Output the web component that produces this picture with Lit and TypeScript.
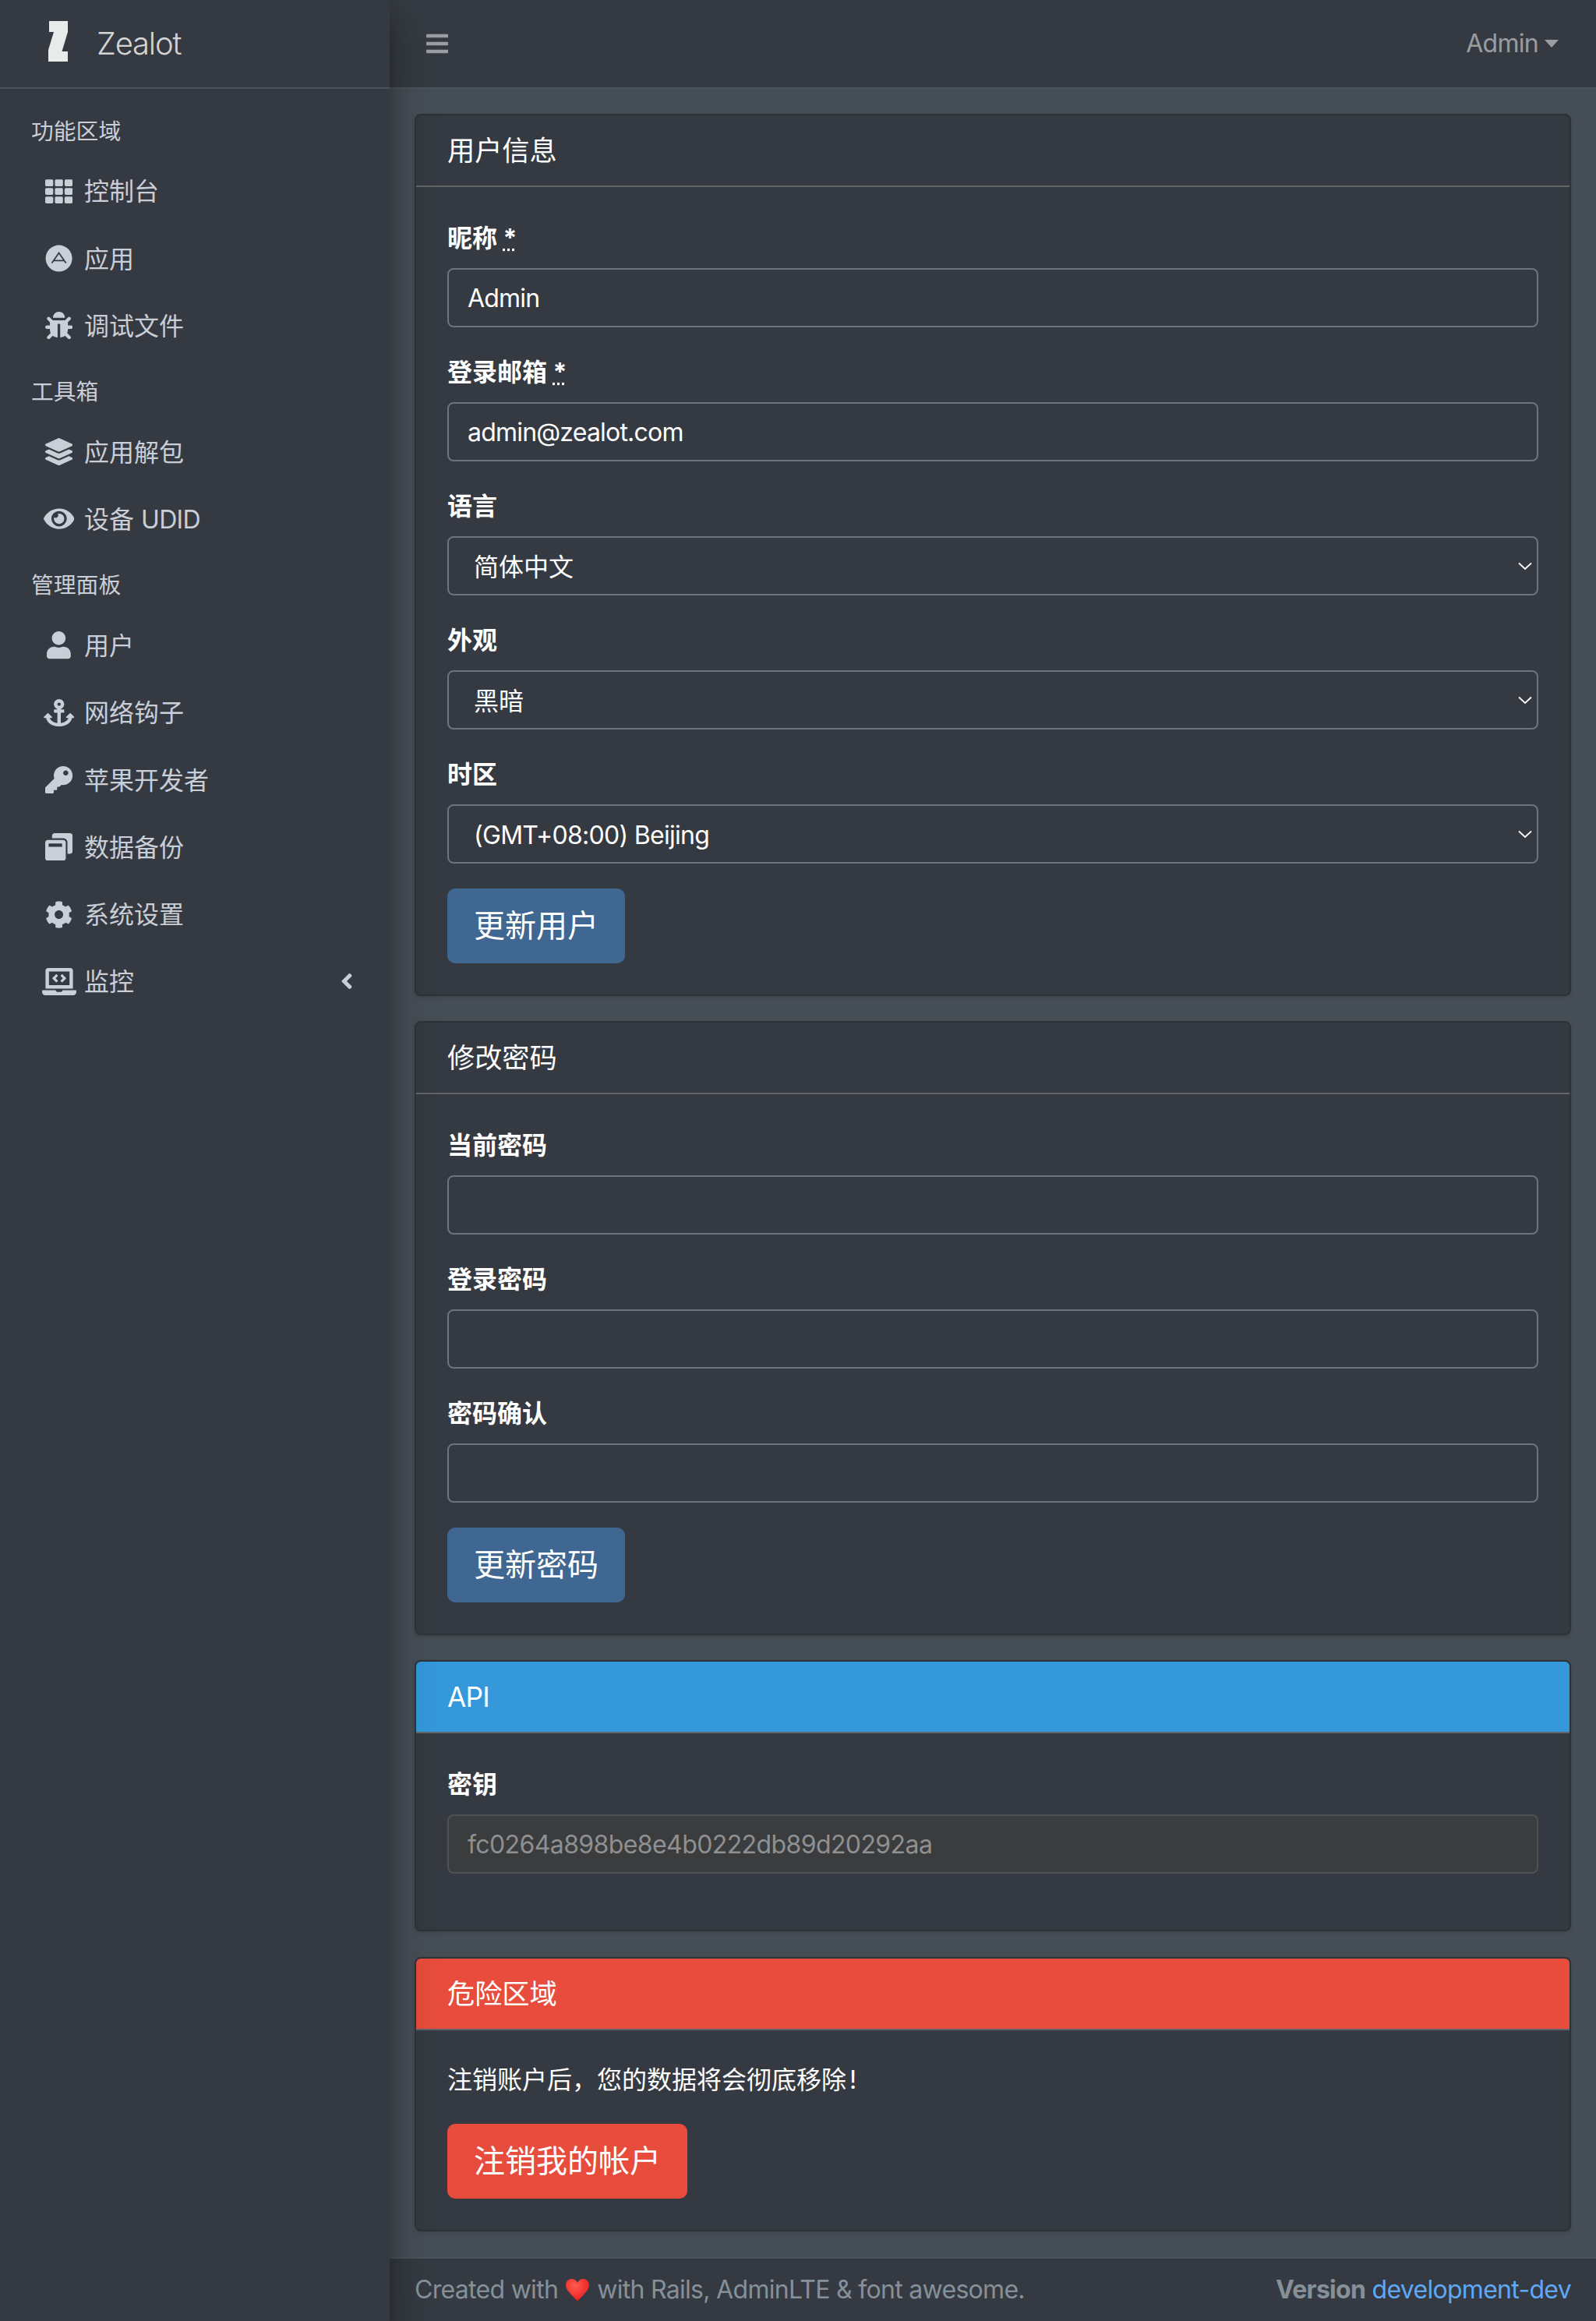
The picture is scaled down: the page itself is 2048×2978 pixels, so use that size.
import { LitElement, html, css, svg } from "lit";
import { customElement } from "lit/decorators.js";

type Icon = { w: number; h?: number; d: string };

const ICONS: Record<string, Icon> = {
  th: { w: 512, d: "M149.333 56v80c0 13.255-10.745 24-24 24H24c-13.255 0-24-10.745-24-24V56c0-13.255 10.745-24 24-24h101.333c13.255 0 24 10.745 24 24zm181.334 240v-80c0-13.255-10.745-24-24-24H205.333c-13.255 0-24 10.745-24 24v80c0 13.255 10.745 24 24 24h101.333c13.256 0 24.001-10.745 24.001-24zm32-240v80c0 13.255 10.745 24 24 24H488c13.255 0 24-10.745 24-24V56c0-13.255-10.745-24-24-24H386.667c-13.255 0-24 10.745-24 24zm-32 80V56c0-13.255-10.745-24-24-24H205.333c-13.255 0-24 10.745-24 24v80c0 13.255 10.745 24 24 24h101.333c13.256 0 24.001-10.745 24.001-24zm-205.334 56H24c-13.255 0-24 10.745-24 24v80c0 13.255 10.745 24 24 24h101.333c13.255 0 24-10.745 24-24v-80c0-13.255-10.745-24-24-24zM0 376v80c0 13.255 10.745 24 24 24h101.333c13.255 0 24-10.745 24-24v-80c0-13.255-10.745-24-24-24H24c-13.255 0-24 10.745-24 24zm386.667-56H488c13.255 0 24-10.745 24-24v-80c0-13.255-10.745-24-24-24H386.667c-13.255 0-24 10.745-24 24v80c0 13.255 10.745 24 24 24zm0 160H488c13.255 0 24-10.745 24-24v-80c0-13.255-10.745-24-24-24H386.667c-13.255 0-24 10.745-24 24v80c0 13.255 10.745 24 24 24zM181.333 376v80c0 13.255 10.745 24 24 24h101.333c13.255 0 24-10.745 24-24v-80c0-13.255-10.745-24-24-24H205.333c-13.255 0-24 10.745-24 24z" },
  bug: { w: 512, d: "M511.988 288.9c-.478 17.43-15.217 31.1-32.653 31.1H424v16c0 21.864-4.882 42.584-13.6 61.145l60.228 60.228c12.496 12.497 12.496 32.758 0 45.255-12.498 12.497-32.759 12.496-45.256 0l-54.736-54.736C345.886 467.965 314.351 480 280 480V236c0-6.627-5.373-12-12-12h-24c-6.627 0-12 5.373-12 12v244c-34.351 0-65.886-12.035-90.636-32.108l-54.736 54.736c-12.498 12.497-32.759 12.496-45.256 0-12.496-12.497-12.496-32.758 0-45.255l60.228-60.228C92.882 378.584 88 357.864 88 336v-16H32.666C15.23 320 .491 306.33.013 288.9-.484 270.816 14.028 256 32 256h56v-58.745l-46.628-46.628c-12.496-12.497-12.496-32.758 0-45.255 12.498-12.497 32.758-12.497 45.256 0L141.255 160h229.489l54.627-54.627c12.498-12.497 32.758-12.497 45.256 0 12.496 12.497 12.496 32.758 0 45.255L424 197.255V256h56c17.972 0 32.484 14.816 31.988 32.9zM257 0c-61.856 0-112 50.144-112 112h224C369 50.144 318.856 0 257 0z" },
  layers: { w: 512, d: "M12.41 148.02l232.94 105.67c6.8 3.09 14.49 3.09 21.29 0l232.94-105.67c16.55-7.51 16.55-32.52 0-40.03L266.65 2.31a25.607 25.607 0 0 0-21.29 0L12.41 107.98c-16.55 7.51-16.55 32.53 0 40.04zm487.18 88.28l-58.09-26.33-161.64 73.27c-7.56 3.43-15.59 5.17-23.86 5.17s-16.29-1.74-23.86-5.17L70.51 209.97l-58.1 26.33c-16.55 7.5-16.55 32.5 0 40l232.94 105.59c6.8 3.08 14.49 3.08 21.29 0L499.59 276.3c16.55-7.5 16.55-32.5 0-40zm0 127.8l-57.87-26.23-161.86 73.37c-7.56 3.43-15.59 5.17-23.86 5.17s-16.29-1.74-23.86-5.17L70.29 337.87 12.41 364.1c-16.55 7.5-16.55 32.5 0 40l232.94 105.59c6.8 3.08 14.49 3.08 21.29 0L499.59 404.1c16.55-7.5 16.55-32.5 0-40z" },
  eye: { w: 576, d: "M572.52 241.4C518.29 135.59 410.93 64 288 64S57.68 135.64 3.48 241.41a32.35 32.35 0 0 0 0 29.19C57.71 376.41 165.07 448 288 448s230.32-71.64 284.52-177.41a32.35 32.35 0 0 0 0-29.19zM288 400a144 144 0 1 1 144-144 143.93 143.93 0 0 1-144 144zm0-240a95.31 95.31 0 0 0-25.31 3.79 47.85 47.85 0 0 1-66.9 66.9A95.78 95.78 0 1 0 288 160z" },
  user: { w: 448, d: "M224 256c70.7 0 128-57.3 128-128S294.7 0 224 0 96 57.3 96 128s57.3 128 128 128zm89.6 32h-16.7c-22.2 10.2-46.9 16-72.9 16s-50.6-5.8-72.9-16h-16.7C60.2 288 0 348.2 0 422.4V464c0 26.5 21.5 48 48 48h352c26.5 0 48-21.5 48-48v-41.6c0-74.2-60.2-134.4-134.4-134.4z" },
  anchor: { w: 576, d: "M12.971 352h32.394C67.172 454.735 181.944 512 288 512c106.229 0 220.853-57.38 242.635-160h32.394c10.691 0 16.045-12.926 8.485-20.485l-67.029-67.029c-4.686-4.686-12.284-4.686-16.971 0l-67.029 67.029c-7.56 7.56-2.206 20.485 8.485 20.485h35.146c-20.29 54.317-84.963 86.588-144.117 94.015V256h52c6.627 0 12-5.373 12-12v-40c0-6.627-5.373-12-12-12h-52v-5.47c37.281-13.178 63.995-48.725 64-90.518C384.005 43.772 341.605.738 289.37.01 235.723-.739 192 42.525 192 96c0 41.798 26.716 77.35 64 90.53V192h-52c-6.627 0-12 5.373-12 12v40c0 6.627 5.373 12 12 12h52v190.015c-58.936-7.399-123.82-39.679-144.117-94.015h35.146c10.691 0 16.045-12.926 8.485-20.485l-67.029-67.029c-4.686-4.686-12.284-4.686-16.971 0L4.485 331.515C-3.074 339.074 2.28 352 12.971 352zM288 64c17.645 0 32 14.355 32 32s-14.355 32-32 32-32-14.355-32-32 14.355-32 32-32z" },
  key: { w: 512, d: "M512 176.001C512 273.203 433.202 352 336 352c-11.22 0-22.19-1.062-32.827-3.069l-24.012 27.014A23.999 23.999 0 0 1 261.223 384H224v40c0 13.255-10.745 24-24 24h-40v40c0 13.255-10.745 24-24 24H24c-13.255 0-24-10.745-24-24v-78.059c0-6.365 2.529-12.47 7.029-16.971l161.802-161.802C163.108 213.814 160 195.271 160 176 160 78.798 238.797.001 335.999 0 433.488-.001 512 78.511 512 176.001zM336 128c0 26.51 21.49 48 48 48s48-21.49 48-48-21.49-48-48-48-48 21.49-48 48z" },
  restore: { w: 512, d: "M512 48v288c0 26.5-21.5 48-48 48h-48V176c0-44.1-35.9-80-80-80H128V48c0-26.5 21.5-48 48-48h288c26.5 0 48 21.5 48 48zM384 176v288c0 26.5-21.5 48-48 48H48c-26.5 0-48-21.5-48-48V176c0-26.5 21.5-48 48-48h288c26.5 0 48 21.5 48 48zm-68 28c0-6.6-5.4-12-12-12H76c-6.6 0-12 5.4-12 12v52h252v-52z" },
  cog: { w: 512, d: "M487.4 315.7l-42.6-24.6c4.3-23.2 4.3-47 0-70.2l42.6-24.6c4.9-2.8 7.1-8.6 5.5-14-11.1-35.6-30-67.8-54.7-94.6-3.8-4.1-10-5.1-14.8-2.3L380.8 110c-17.9-15.4-38.5-27.3-60.8-35.1V25.8c0-5.6-3.9-10.5-9.4-11.7-36.7-8.2-74.3-7.8-109.2 0-5.5 1.2-9.4 6.1-9.4 11.7V75c-22.2 7.9-42.8 19.8-60.8 35.1L88.7 85.5c-4.9-2.8-11-1.9-14.8 2.3-24.7 26.7-43.6 58.9-54.7 94.6-1.7 5.4.6 11.2 5.5 14L67.3 221c-4.3 23.2-4.3 47 0 70.2l-42.6 24.6c-4.9 2.8-7.1 8.6-5.5 14 11.1 35.6 30 67.8 54.7 94.6 3.8 4.1 10 5.1 14.8 2.3l42.6-24.6c17.9 15.4 38.5 27.3 60.8 35.1v49.2c0 5.6 3.9 10.5 9.4 11.7 36.7 8.2 74.3 7.8 109.2 0 5.5-1.2 9.4-6.1 9.4-11.7v-49.2c22.2-7.9 42.8-19.8 60.8-35.1l42.6 24.6c4.9 2.8 11 1.9 14.8-2.3 24.7-26.7 43.6-58.9 54.7-94.6 1.5-5.5-.7-11.3-5.6-14.1zM256 336c-44.1 0-80-35.9-80-80s35.9-80 80-80 80 35.9 80 80-35.9 80-80 80z" },
  laptop: { w: 640, d: "M255.03 261.65c6.25 6.25 16.38 6.25 22.63 0l11.31-11.31c6.25-6.25 6.25-16.38 0-22.63L253.25 192l35.71-35.72c6.25-6.25 6.25-16.38 0-22.63l-11.31-11.31c-6.25-6.25-16.38-6.25-22.63 0l-58.34 58.34c-6.25 6.25-6.25 16.38 0 22.63l58.35 58.34zm96.01-11.3l11.31 11.31c6.25 6.25 16.38 6.25 22.63 0l58.34-58.34c6.25-6.25 6.25-16.38 0-22.63l-58.34-58.34c-6.25-6.25-16.38-6.25-22.63 0l-11.31 11.31c-6.25 6.25-6.25 16.38 0 22.63L386.75 192l-35.71 35.72c-6.25 6.25-6.25 16.38 0 22.63zM624 416H381.54c-.74 19.81-14.71 32-32.74 32H288c-18.69 0-33.02-17.47-32.77-32H16c-8.8 0-16 7.2-16 16v16c0 35.2 28.8 64 64 64h512c35.2 0 64-28.8 64-64v-16c0-8.8-7.2-16-16-16zM576 48c0-26.4-21.6-48-48-48H112C85.6 0 64 21.6 64 48v336h512V48zm-64 272H128V64h384v256z" },
  angle: { w: 256, d: "M31.7 239l136-136c9.4-9.4 24.6-9.4 33.9 0l22.6 22.6c9.4 9.4 9.4 24.6 0 33.9L127.9 256l96.4 96.4c9.4 9.4 9.4 24.6 0 33.9L201.7 409c-9.4 9.4-24.6 9.4-33.9 0l-136-136c-9.5-9.4-9.5-24.6-.1-34z" },
  bars: { w: 448, d: "M16 132h416c8.837 0 16-7.163 16-16V76c0-8.837-7.163-16-16-16H16C7.163 60 0 67.163 0 76v40c0 8.837 7.163 16 16 16zm0 160h416c8.837 0 16-7.163 16-16v-40c0-8.837-7.163-16-16-16H16c-8.837 0-16 7.163-16 16v40c0 8.837 7.163 16 16 16zm0 160h416c8.837 0 16-7.163 16-16v-40c0-8.837-7.163-16-16-16H16c-8.837 0-16 7.163-16 16v40c0 8.837 7.163 16 16 16z" },
};

function icon(name: string, size: number) {
  const i = ICONS[name];
  return html`<svg class="ic" viewBox="0 0 ${i.w} 512" width=${(i.w / 512) * size} height=${size} fill="currentColor">${svg`<path d=${i.d}></path>`}</svg>`;
}

const appIcon = html`<svg class="ic" viewBox="0 0 36 36" width="35.2" height="35.2">
  <circle cx="18" cy="18" r="17.4" fill="currentColor"></circle>
  <path d="M8.700 24 18 10.700 27.300 24M11.200 20.800h13.600" fill="none" stroke="#353a42" stroke-width="1.800"></path>
</svg>`;

type NavEntry = { head: string } | { icon: string; label: string; latin?: string; arrow?: boolean };

const NAV: NavEntry[] = [
  { head: "功能区域" },
  { icon: "th", label: "控制台" },
  { icon: "app", label: "应用" },
  { icon: "bug", label: "调试文件" },
  { head: "工具箱" },
  { icon: "layers", label: "应用解包" },
  { icon: "eye", label: "设备 ", latin: "UDID" },
  { head: "管理面板" },
  { icon: "user", label: "用户" },
  { icon: "anchor", label: "网络钩子" },
  { icon: "key", label: "苹果开发者" },
  { icon: "restore", label: "数据备份" },
  { icon: "cog", label: "系统设置" },
  { icon: "laptop", label: "监控", arrow: true },
];

@customElement("app-root")
export class AppRoot extends LitElement {
  static styles = css`
    :host {
      display: grid;
      grid-template-columns: 500px 1fr;
      min-height: 2978px;
      background: #454d55;
      font-family: Inter, "Noto Sans CJK SC", sans-serif;
      font-size: 32px;
      line-height: 48px;
      color: #fff;
    }
    * { box-sizing: border-box; }
    .ic { display: block; flex: none; }
    .lat { letter-spacing: -0.7px; }

    .sidebar {
      position: relative;
      z-index: 2;
      background: #353a42;
      box-shadow: 0 28px 56px rgba(0, 0, 0, 0.25), 0 20px 20px rgba(0, 0, 0, 0.22);
      color: #c9ced7;
    }
    .brand {
      display: flex;
      align-items: center;
      height: 114px;
      padding-left: 62px;
      gap: 37px;
      border-bottom: 2px solid #4b545c;
      font-size: 40px;
      font-weight: 300;
      letter-spacing: -1.2px;
      color: rgba(255, 255, 255, 0.8);
    }
    .logo { margin-top: -6px; }
    .nav { padding-top: 13.5px; }
    .nav-head {
      height: 75.6px;
      padding: 19px 0 0 40px;
      font-size: 28.8px;
      line-height: 43px;
    }
    .nav-item {
      display: flex;
      align-items: center;
      height: 86.3px;
      padding: 0 47px 0 50px;
    }
    .nav-icon {
      display: flex;
      justify-content: center;
      width: 51px;
      margin: -2px 7px 0 0;
    }
    .nav-arrow { margin: -3px 0 0 auto; }

    .main { display: flex; flex-direction: column; min-width: 0; }
    .topbar {
      display: flex;
      align-items: center;
      justify-content: space-between;
      height: 114px;
      padding: 0 48px 0 47px;
      background: #353a42;
      border-bottom: 2px solid #4b545c;
      color: rgba(255, 255, 255, 0.5);
    }
    .user { display: flex; align-items: center; gap: 8px; }
    .caret {
      width: 0;
      height: 0;
      border-top: 10px solid currentColor;
      border-left: 9.6px solid transparent;
      border-right: 9.6px solid transparent;
    }
    .content {
      flex: 1;
      display: flex;
      flex-direction: column;
      gap: 32px;
      padding: 32px;
    }
    .card {
      background: #353a42;
      border: 2px solid #2e3239;
      border-radius: 8px;
      box-shadow: 0 2px 4px rgba(0, 0, 0, 0.12);
    }
    .card.last { margin: 1px 0; }
    .card-head {
      height: 92px;
      padding: 24px 40px;
      font-size: 35.2px;
      line-height: 42px;
      border-bottom: 2px solid #636567;
    }
    .card-head.info { background: #3498db; border-radius: 6px 6px 0 0; }
    .card-head.danger { background: #e74c3c; border-radius: 6px 6px 0 0; }
    .card-body { padding: 40px; }
    .group { margin-bottom: 32px; }
    label {
      display: block;
      padding-top: 2px;
      margin-bottom: 14px;
      font-weight: 700;
    }
    abbr {
      text-decoration: underline dotted;
      cursor: help;
    }
    .control {
      display: block;
      width: 100%;
      height: 76px;
      padding: 12px 24px;
      background: #353a42;
      border: 2px solid #6c757d;
      border-radius: 8px;
      color: #fff;
      font: inherit;
      outline: none;
      appearance: none;
    }
    input.control { letter-spacing: -0.8px; }
    .control[disabled] {
      background: #3b3c3e;
      border-color: #4e5256;
      color: #8f9091;
      -webkit-text-fill-color: #8f9091;
      opacity: 1;
      letter-spacing: -0.6px;
    }
    select.control { padding: 14px 48px 10px 32px; }
    .select-wrap { position: relative; }
    .chev { position: absolute; right: 8px; top: 33px; pointer-events: none; }
    .btn {
      display: block;
      height: 96px;
      padding: 16px 32px;
      border: 2px solid transparent;
      border-radius: 10px;
      color: #fff;
      font: inherit;
      font-size: 40px;
      line-height: 60px;
    }
    .btn.primary { background: #3f6791; }
    .btn.danger { background: #e74c3c; }
    p { margin: 0 0 32px; }
    .bang { margin-left: 4px; }

    .footer {
      display: flex;
      align-items: center;
      justify-content: space-between;
      height: 82px;
      padding: 0 32px;
      background: #353a42;
      border-top: 2px solid #4b545c;
      color: #869099;
      letter-spacing: -0.7px;
    }
    .footer-left { display: flex; align-items: center; gap: 10px; }
    .footer b { font-weight: 700; }
    .footer a { color: #5fa8f6; text-decoration: none; }
  `;

  private field(label: string, value = "", required = false) {
    return html`<div class="group">
      <label>${label}${required ? html` <abbr title="required">*</abbr>` : ""}</label>
      <input class="control" type="text" .value=${value} />
    </div>`;
  }

  private select(label: string, options: string[], latin = false) {
    return html`<div class="group">
      <label>${label}</label>
      <div class="select-wrap">
        <select class="control ${latin ? "lat" : ""}">
          ${options.map((o, i) => html`<option ?selected=${i === 0}>${o}</option>`)}
        </select>
        <svg class="chev" width="18" height="11" viewBox="0 0 18 11" fill="none" stroke="#fff" stroke-width="1.800">
          <path d="M1 1.500 9 9l8-7.500"></path>
        </svg>
      </div>
    </div>`;
  }

  render() {
    return html`
      <aside class="sidebar">
        <div class="brand">
          <svg class="logo" width="25" height="52" viewBox="0 0 25 52" fill="#e9eaea">
            <path d="M1 0H25V14L17.500 39H25V52H0V37L7 14H1Z"></path>
          </svg>
          <span>Zealot</span>
        </div>
        <nav class="nav">
          ${NAV.map((e) =>
            "head" in e
              ? html`<div class="nav-head">${e.head}</div>`
              : html`<div class="nav-item">
                  <span class="nav-icon">${e.icon === "app" ? appIcon : icon(e.icon, 35.2)}</span>
                  <span>${e.label}${e.latin ? html`<span class="lat">${e.latin}</span>` : ""}</span>
                  ${e.arrow ? html`<span class="nav-arrow">${icon("angle", 32)}</span>` : ""}
                </div>`
          )}
        </nav>
      </aside>
      <div class="main">
        <header class="topbar">
          ${icon("bars", 32)}
          <div class="user"><span class="lat">Admin</span><span class="caret"></span></div>
        </header>
        <main class="content">
          <section class="card">
            <div class="card-head">用户信息</div>
            <div class="card-body">
              ${this.field("昵称", "Admin", true)}
              ${this.field("登录邮箱", "admin@zealot.com", true)}
              ${this.select("语言", ["简体中文", "English"])}
              ${this.select("外观", ["黑暗", "明亮", "跟随系统"])}
              ${this.select("时区", ["(GMT+08:00) Beijing", "(GMT+00:00) UTC"], true)}
              <button class="btn primary">更新用户</button>
            </div>
          </section>
          <section class="card">
            <div class="card-head">修改密码</div>
            <div class="card-body">
              ${this.field("当前密码")}
              ${this.field("登录密码")}
              ${this.field("密码确认")}
              <button class="btn primary">更新密码</button>
            </div>
          </section>
          <section class="card">
            <div class="card-head info lat">API</div>
            <div class="card-body">
              <div class="group">
                <label>密钥</label>
                <input class="control" type="text" disabled .value=${"fc0264a898be8e4b0222db89d20292aa"} />
              </div>
            </div>
          </section>
          <section class="card last">
            <div class="card-head danger">危险区域</div>
            <div class="card-body">
              <p>注销账户后，您的数据将会彻底移除<span class="bang">!</span></p>
              <button class="btn danger">注销我的帐户</button>
            </div>
          </section>
        </main>
        <footer class="footer">
          <div class="footer-left">
            <span>Created with</span>
            <svg width="30" height="29" viewBox="0 0 30 29">
              <defs>
                <radialGradient id="heart" cx="0.4" cy="0.3" r="0.8">
                  <stop offset="0" stop-color="#ff5a50"></stop>
                  <stop offset="0.7" stop-color="#ee2a28"></stop>
                  <stop offset="1" stop-color="#b80d10"></stop>
                </radialGradient>
              </defs>
              <path fill="url(#heart)" d="M15 29C13.500 26.500 9 22.500 5.500 18.500 2 14.500 0 11.500 0 8 0 3.500 3.400 0 7.500 0 10.800 0 13.500 1.800 15 5 16.500 1.800 19.200 0 22.500 0 26.600 0 30 3.500 30 8c0 3.500-2 6.500-5.500 10.500C21 22.500 16.500 26.500 15 29Z"></path>
            </svg>
            <span>with Rails, AdminLTE &amp; font awesome.</span>
          </div>
          <div><b>Version</b> <a href="#">development-dev</a></div>
        </footer>
      </div>
    `;
  }
}
